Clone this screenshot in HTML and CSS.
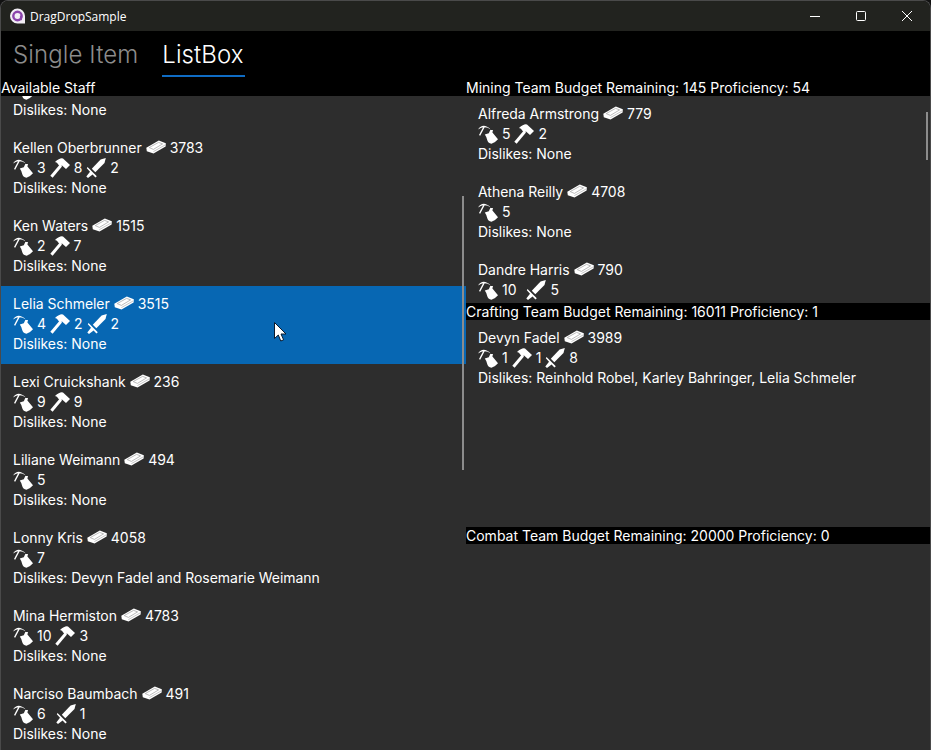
FILE: index.html
```html
<!DOCTYPE html>
<html lang="en">
<head>
    <meta charset="UTF-8">
    <title>DragDropSample</title>
    <link rel="stylesheet" href="styles.css">
</head>
<body>
    <!-- Icons -->
    <svg class="sprite" width="0" height="0">
        <symbol id="i-mining" viewBox="0 0 20 20">
            <path d="M0 5.5Q5 -1.8 12.8 5.5Q6.5 1 0 5.5Z" fill="#fff"/>
            <path d="M6.2 2.6L1.6 11.4" stroke="#fff" stroke-width="1.3" fill="none"/>
            <path d="M6.8 10.6L10.8 9.2L12.3 6L15 6L14.4 8.4L20 15.2Q17.5 18.2 13.5 19.8Q9.8 19 9.2 16Q8.6 13 6.8 10.6Z" fill="#fff"/>
        </symbol>
        <symbol id="i-hammer" viewBox="0 0 20 20">
            <path d="M0.3 17.8L9.8 6.5L12 8.5L2.6 19.8Z" fill="#fff"/>
            <path d="M5 4Q10 -0.5 13 0.5L20 7L16 11L12 7.5L10.2 8.5L8 6.2Q7.5 4.2 5 4Z" fill="#fff"/>
        </symbol>
        <symbol id="i-sword" viewBox="0 0 20 20">
            <path d="M19.8 0L18.5 5L9.3 14.2L5.8 10.8L14.6 1.5Z" fill="#fff"/>
            <path d="M1.5 9L10.8 18.2L9.4 19.4L6.6 16.6L2 20L0.3 18.4L4 13.8L0.8 10.2Z" fill="#fff"/>
        </symbol>
        <symbol id="i-ingot" viewBox="0 0 20 14">
            <path d="M0.3 7.8L12.8 0.5L19.8 3.2L19.6 6.5L7.5 13.6L0.8 11.2Z" fill="#fff"/>
            <path d="M3.2 7.6L12.6 2.4L16.6 3.9L7.4 9.4Z" fill="none" stroke="#a0a0a0" stroke-width="0.7"/>
            <path d="M7.4 11.6L19 5" stroke="#a0a0a0" stroke-width="0.6" fill="none"/>
        </symbol>
    </svg>

    <div class="window">
        <!-- Title bar -->
        <header class="titlebar">
            <svg class="app-icon" width="17" height="16" viewBox="0 0 16 16">
                <path d="M8 0.5A7.5 7.5 0 0 0 8 15.5H15.5V8A7.5 7.5 0 0 0 8 0.5Z" fill="#f2eef5"/>
                <circle cx="8" cy="8" r="4.2" fill="none" stroke="#8b44ac" stroke-width="2.4"/>
                <rect x="10.4" y="7.6" width="2" height="4.6" fill="#8b44ac"/>
            </svg>
            <span class="app-title">DragDropSample</span>
            <div class="caption-buttons">
                <div class="caption-btn">
                    <svg width="12" height="12" viewBox="0 0 12 12"><path d="M1 6.5H11" stroke="#fff" fill="none"/></svg>
                </div>
                <div class="caption-btn">
                    <svg width="12" height="12" viewBox="0 0 12 12"><rect x="1.5" y="1.5" width="9" height="9" rx="1" stroke="#fff" fill="none"/></svg>
                </div>
                <div class="caption-btn">
                    <svg width="12" height="12" viewBox="0 0 12 12"><path d="M1 1L11 11M11 1L1 11" stroke="#fff" fill="none"/></svg>
                </div>
            </div>
        </header>

        <!-- Tabs -->
        <nav class="tabs">
            <div class="tab">Single Item</div>
            <div class="tab tab-active">ListBox</div>
        </nav>

        <main class="panels">
            <!-- Available staff -->
            <section class="staff-panel">
                <h2 class="panel-title">Available Staff</h2>
                <div class="staff-list">
                    <div class="row row-cut">
                        <div class="line"><svg class="icon"><use href="#i-mining"/></svg></div>
                        <div class="line">Dislikes: None</div>
                    </div>
                    <div class="row">
                        <div class="line">Kellen Oberbrunner <svg class="ingot"><use href="#i-ingot"/></svg> 3783</div>
                        <div class="line">
                            <svg class="icon"><use href="#i-mining"/></svg> 3
                            <svg class="icon"><use href="#i-hammer"/></svg> 8
                            <svg class="icon"><use href="#i-sword"/></svg> 2
                        </div>
                        <div class="line">Dislikes: None</div>
                    </div>
                    <div class="row">
                        <div class="line">Ken Waters <svg class="ingot"><use href="#i-ingot"/></svg> 1515</div>
                        <div class="line">
                            <svg class="icon"><use href="#i-mining"/></svg> 2
                            <svg class="icon"><use href="#i-hammer"/></svg> 7
                        </div>
                        <div class="line">Dislikes: None</div>
                    </div>
                    <div class="row row-selected">
                        <div class="line">Lelia Schmeler <svg class="ingot"><use href="#i-ingot"/></svg> 3515</div>
                        <div class="line">
                            <svg class="icon"><use href="#i-mining"/></svg> 4
                            <svg class="icon"><use href="#i-hammer"/></svg> 2
                            <svg class="icon"><use href="#i-sword"/></svg> 2
                        </div>
                        <div class="line">Dislikes: None</div>
                    </div>
                    <div class="row">
                        <div class="line">Lexi Cruickshank <svg class="ingot"><use href="#i-ingot"/></svg> 236</div>
                        <div class="line">
                            <svg class="icon"><use href="#i-mining"/></svg> 9
                            <svg class="icon"><use href="#i-hammer"/></svg> 9
                        </div>
                        <div class="line">Dislikes: None</div>
                    </div>
                    <div class="row">
                        <div class="line">Liliane Weimann <svg class="ingot"><use href="#i-ingot"/></svg> 494</div>
                        <div class="line"><svg class="icon"><use href="#i-mining"/></svg> 5</div>
                        <div class="line">Dislikes: None</div>
                    </div>
                    <div class="row">
                        <div class="line">Lonny Kris <svg class="ingot"><use href="#i-ingot"/></svg> 4058</div>
                        <div class="line"><svg class="icon"><use href="#i-mining"/></svg> 7</div>
                        <div class="line">Dislikes: Devyn Fadel and Rosemarie Weimann</div>
                    </div>
                    <div class="row">
                        <div class="line">Mina Hermiston <svg class="ingot"><use href="#i-ingot"/></svg> 4783</div>
                        <div class="line">
                            <svg class="icon"><use href="#i-mining"/></svg> 10
                            <svg class="icon"><use href="#i-hammer"/></svg> 3
                        </div>
                        <div class="line">Dislikes: None</div>
                    </div>
                    <div class="row">
                        <div class="line">Narciso Baumbach <svg class="ingot"><use href="#i-ingot"/></svg> 491</div>
                        <div class="line">
                            <svg class="icon"><use href="#i-mining"/></svg> 6
                            <svg class="icon icon-skip"><use href="#i-sword"/></svg> 1
                        </div>
                        <div class="line">Dislikes: None</div>
                    </div>
                </div>
                <div class="scroll-thumb scroll-left"></div>
            </section>

            <!-- Teams -->
            <div class="teams">
                <section class="team">
                    <h2 class="panel-title">Mining Team Budget Remaining: 145 Proficiency: 54</h2>
                    <div class="team-list">
                        <div class="row">
                            <div class="line">Alfreda Armstrong <svg class="ingot"><use href="#i-ingot"/></svg> 779</div>
                            <div class="line">
                                <svg class="icon"><use href="#i-mining"/></svg> 5
                                <svg class="icon"><use href="#i-hammer"/></svg> 2
                            </div>
                            <div class="line">Dislikes: None</div>
                        </div>
                        <div class="row">
                            <div class="line">Athena Reilly <svg class="ingot"><use href="#i-ingot"/></svg> 4708</div>
                            <div class="line"><svg class="icon"><use href="#i-mining"/></svg> 5</div>
                            <div class="line">Dislikes: None</div>
                        </div>
                        <div class="row">
                            <div class="line">Dandre Harris <svg class="ingot"><use href="#i-ingot"/></svg> 790</div>
                            <div class="line">
                                <svg class="icon"><use href="#i-mining"/></svg> 10
                                <svg class="icon icon-skip"><use href="#i-sword"/></svg> 5
                            </div>
                        </div>
                    </div>
                    <div class="scroll-thumb scroll-right"></div>
                </section>
                <section class="team">
                    <h2 class="panel-title">Crafting Team Budget Remaining: 16011 Proficiency: 1</h2>
                    <div class="team-list">
                        <div class="row">
                            <div class="line">Devyn Fadel <svg class="ingot"><use href="#i-ingot"/></svg> 3989</div>
                            <div class="line">
                                <svg class="icon"><use href="#i-mining"/></svg> 1
                                <svg class="icon"><use href="#i-hammer"/></svg> 1
                                <svg class="icon"><use href="#i-sword"/></svg> 8
                            </div>
                            <div class="line">Dislikes: Reinhold Robel, Karley Bahringer, Lelia Schmeler</div>
                        </div>
                    </div>
                </section>
                <section class="team">
                    <h2 class="panel-title">Combat Team Budget Remaining: 20000 Proficiency: 0</h2>
                    <div class="team-list"></div>
                </section>
            </div>
        </main>

        <!-- Mouse pointer -->
        <svg class="pointer" width="13" height="20" viewBox="0 0 13 20">
            <path d="M0.5 0.5V16.5L4.3 13L6.8 19L9.6 17.8L7 12H12Z" fill="#fff" stroke="#0a1a2e" stroke-width="1"/>
        </svg>
    </div>
</body>
</html>
```

FILE: styles.css
```css
:root {
    --bar-color: #22231f;
    --panel-color: #2d2d2d;
    --selected-color: #0767b3;
    --accent-color: #0f6cc4;
    --thumb-color: #8c8c8c;
}

* {
    box-sizing: border-box;
}

html, body {
    margin: 0;
    height: 100%;
    overflow: hidden;
    background-color: #111;
}

body {
    font-family: "Inter", "Liberation Sans", sans-serif;
    font-size: 14px;
    color: #fff;
}

.sprite {
    position: absolute;
}

.window {
    position: relative;
    display: flex;
    flex-direction: column;
    height: 750px;
    border: 1px solid #4a4a4a;
    border-bottom: 0;
    border-radius: 8px 8px 0 0;
    overflow: hidden;
}

/* Title bar */
.titlebar {
    display: flex;
    align-items: center;
    flex: 0 0 30px;
    padding-left: 8px;
    background-color: var(--bar-color);
}

.app-icon {
    margin-right: 4px;
}

.app-title {
    font-family: "Open Sans", "Liberation Sans", sans-serif;
    font-size: 12px;
}

.caption-buttons {
    display: flex;
    margin-left: auto;
}

.caption-btn {
    display: flex;
    align-items: center;
    justify-content: center;
    width: 46px;
    height: 30px;
}

/* Tabs */
.tabs {
    display: flex;
    flex: 0 0 49px;
    background-color: #000;
}

.tab {
    height: 46px;
    padding: 6px 12px 0;
    font-size: 24px;
    font-weight: 300;
    letter-spacing: 0.1px;
    line-height: 36px;
    color: #8c8c8c;
}

.tab-active {
    position: relative;
    color: #fff;
}

.tab-active::after {
    content: "";
    position: absolute;
    left: 12px;
    right: 11px;
    bottom: 0;
    height: 2px;
    background-color: var(--accent-color);
}

/* Panels */
.panels {
    display: grid;
    flex: 1;
    grid-template-columns: 465px 1fr;
    min-height: 0;
    background-color: var(--panel-color);
}

.staff-panel {
    position: relative;
    display: flex;
    flex-direction: column;
    min-height: 0;
    overflow: hidden;
}

.panel-title {
    flex: 0 0 16px;
    margin: 0;
    font-size: 14px;
    font-weight: 400;
    line-height: 16px;
    white-space: nowrap;
    background-color: #000;
}

.staff-list,
.team-list {
    flex: 1;
    min-height: 0;
    overflow: hidden;
}

.row {
    height: 78px;
    padding: 7px 12px 11px;
    letter-spacing: -0.03px;
}

.row-cut {
    height: 51px;
    margin-top: -17px;
    padding: 0 12px;
}

.row-selected {
    background-color: var(--selected-color);
}

.line {
    display: flex;
    align-items: center;
    gap: 4px;
    height: 20px;
    white-space: nowrap;
}

.icon {
    flex: none;
    width: 20px;
    height: 20px;
    margin-top: 2px;
}

.icon-skip {
    margin-left: 6px;
}

.ingot {
    flex: none;
    width: 20px;
    height: 14px;
}

/* Teams */
.teams {
    display: grid;
    grid-template-rows: 223px 224px 1fr;
    min-height: 0;
}

.team {
    position: relative;
    display: flex;
    flex-direction: column;
    min-height: 0;
    overflow: hidden;
}

.team .panel-title {
    flex-basis: 17px;
    line-height: 17px;
}

.team:first-child .panel-title {
    flex-basis: 16px;
    line-height: 16px;
}

.scroll-thumb {
    position: absolute;
    width: 2px;
    background-color: var(--thumb-color);
}

.scroll-left {
    top: 116px;
    right: 2px;
    height: 274px;
}

.scroll-right {
    top: 32px;
    right: 2px;
    height: 48px;
}

.pointer {
    position: absolute;
    left: 273px;
    top: 321px;
}
```
